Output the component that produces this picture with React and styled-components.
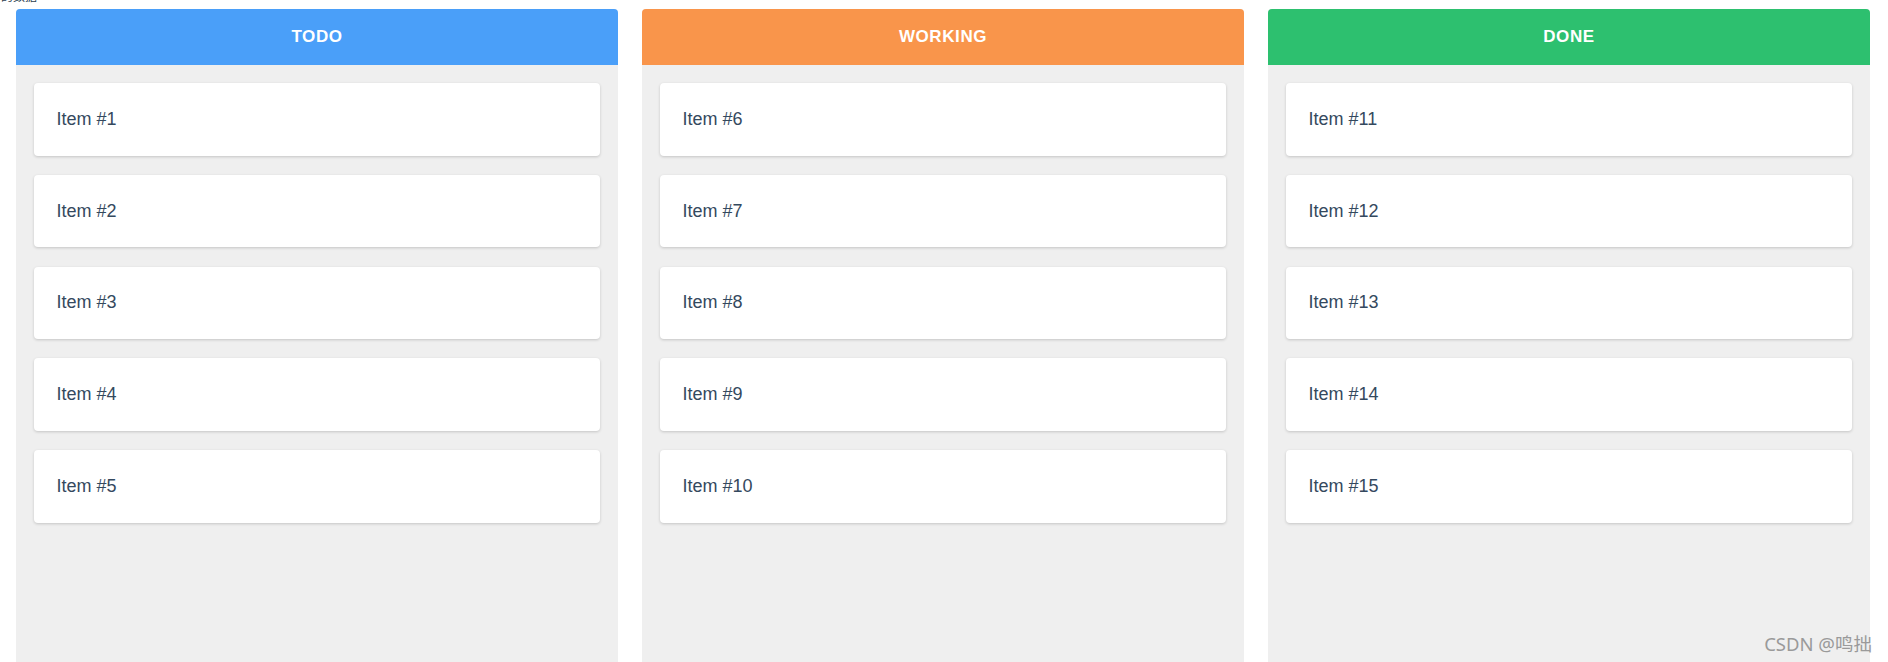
import React from "react";
import styled, { createGlobalStyle } from "styled-components";

const GlobalStyle = createGlobalStyle`
  html, body {
    margin: 0;
    padding: 0;
    background: #ffffff;
    overflow: hidden;
  }
  body {
    font-family: "Liberation Sans", Arial, "Noto Sans CJK SC", sans-serif;
    color: #2c3e50;
  }
`;

const Page = styled.div`
  position: relative;
  height: 662px;
  overflow: hidden;
`;

const Caption = styled.div`
  font-size: 12px;
  line-height: 12px;
  height: 12px;
  margin-top: -10px;
  padding-left: 1px;
  color: #2c3e50;
  font-family: "Noto Sans CJK SC", sans-serif;
`;

const Board = styled.div`
  display: flex;
  gap: 24px;
  padding: 7px 0 0 16px;
`;

const Column = styled.section`
  width: 602px;
  height: 700px;
  background: #efefef;
  border-radius: 4px 4px 0 0;
  display: flex;
  flex-direction: column;
`;

const Header = styled.header`
  height: 56px;
  display: flex;
  align-items: center;
  justify-content: center;
  background: ${({ color }) => color};
  border-radius: 4px 4px 0 0;
  color: #ffffff;
  font-weight: bold;
  font-size: 17px;
  letter-spacing: 0.6px;
`;

const List = styled.div`
  display: flex;
  flex-direction: column;
  gap: 19.2px;
  padding: 18px 18px 0;
`;

const Card = styled.div`
  height: 72.6px;
  display: flex;
  align-items: center;
  padding: 0 22.5px;
  background: #ffffff;
  border-radius: 4px;
  box-shadow: 0 1px 3px rgba(0, 0, 0, 0.18);
  font-size: 18px;
  color: #34495e;
`;

const Watermark = styled.div`
  position: absolute;
  right: 16px;
  bottom: 6px;
  font-size: 18.5px;
  color: #9a9a9a;
  font-family: "Noto Sans", "Noto Sans CJK SC", sans-serif;
`;

const columns = [
  { title: "TODO", color: "#4a9ff9", items: [1, 2, 3, 4, 5] },
  { title: "WORKING", color: "#f9954b", items: [6, 7, 8, 9, 10] },
  { title: "DONE", color: "#2dc06f", items: [11, 12, 13, 14, 15] },
];

export default function App() {
  return (
    <Page>
      <GlobalStyle />
      <Caption>的数据</Caption>
      <Board>
        {columns.map((col) => (
          <Column key={col.title}>
            <Header color={col.color}>{col.title}</Header>
            <List>
              {col.items.map((n) => (
                <Card key={n}>Item #{n}</Card>
              ))}
            </List>
          </Column>
        ))}
      </Board>
      <Watermark>CSDN @鸣拙</Watermark>
    </Page>
  );
}
